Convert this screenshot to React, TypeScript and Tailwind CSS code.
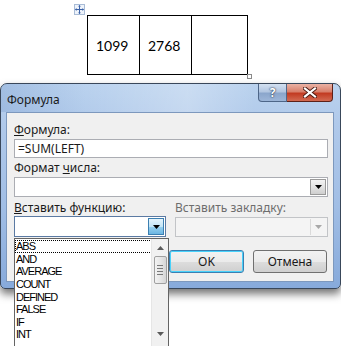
import React from "react";

const ui = { fontFamily: '"Noto Sans", "Open Sans", sans-serif' };
const listFont = { fontFamily: '"Liberation Sans", Arial, sans-serif' };

function Arrow({ color = "#000" }: { color?: string }) {
  return (
    <svg width="7" height="4" viewBox="0 0 7 4">
      <path d="M0 0 H7 L3.5 4 Z" fill={color} />
    </svg>
  );
}

function MoveIcon() {
  return (
    <div className="absolute left-[74px] top-[4px] w-[11px] h-[11px] border border-[#a9bcd6] bg-[#eef3fa] flex items-center justify-center">
      <svg width="9" height="9" viewBox="0 0 9 9">
        <path d="M4.5 0.5 V8.5 M0.5 4.5 H8.5" stroke="#3b62a8" strokeWidth="1" />
        <path d="M4.5 0 L3 1.6 H6 Z M4.5 9 L3 7.4 H6 Z M0 4.5 L1.6 3 V6 Z M9 4.5 L7.4 3 V6 Z" fill="#3b62a8" />
      </svg>
    </div>
  );
}

export default function App() {
  const items = ["ABS", "AND", "AVERAGE", "COUNT", "DEFINED", "FALSE", "IF", "INT"];
  return (
    <div className="relative w-[341px] h-[346px] bg-white overflow-hidden" style={ui}>
      <MoveIcon />
      {/* table */}
      <div className="pt-[15px] pl-[87px]">
        <div className="relative flex w-[161px] h-[60px] border border-black">
          <div
            className="w-[52px] border-r border-black flex items-center pl-[8px] text-[14px] text-black"
            style={{ fontFamily: "Lato, sans-serif" }}
          >
            1099
          </div>
          <div
            className="w-[52px] border-r border-black flex items-center pl-[8px] text-[14px] text-black"
            style={{ fontFamily: "Lato, sans-serif" }}
          >
            2768
          </div>
          <div className="w-[53px]" />
          <div className="absolute left-[159px] top-[58px] w-[5px] h-[5px] border border-[#8a8a8a] bg-white" />
        </div>
      </div>

      {/* dialog */}
      <div className="mt-[8px] w-[341px] h-[206px] rounded-t-[7px] rounded-b-[5px] border border-[#39475a] bg-[linear-gradient(180deg,#bad2ee_0%,#b0c9ea_20%,#a1bee5_60%,#87aadb_100%)] shadow-[0_5px_8px_rgba(0,0,0,0.55)] pl-[5px] pr-[6px] flex flex-col">
        {/* title bar */}
        <div className="h-[28px] flex items-start justify-between bg-[linear-gradient(90deg,rgba(120,155,205,0.35)_0%,rgba(255,255,255,0)_25%,rgba(255,255,255,0.25)_55%,rgba(255,255,255,0)_75%)] -ml-[5px] -mr-[6px] pl-[6px] pr-[7px] rounded-t-[6px]">
          <div className="pt-[8px] text-[12px] leading-[16px] text-[#1a1a1a]">Формула</div>
          <div className="flex">
            <div className="w-[29px] h-[18px] rounded-bl-[4px] border border-t-0 border-[#4e6688] bg-[linear-gradient(180deg,#d3e0f0_0%,#b2c6e1_45%,#8ba6cc_55%,#9db6d8_100%)] flex items-center justify-center text-[12px] font-bold text-white leading-none [text-shadow:0_0_1px_#24344d,0_0_2px_#24344d]">
              ?
            </div>
            <div className="w-[46px] h-[18px] rounded-br-[4px] border border-l-0 border-t-0 border-[#5d2119] bg-[linear-gradient(180deg,#eab2a4_0%,#d8806c_45%,#c23b22_55%,#d26a52_100%)] flex items-center justify-center">
              <svg width="14" height="11" viewBox="0 0 14 11">
                <path d="M2 1.5 L12 9.5 M12 1.5 L2 9.5" stroke="#4a1a12" strokeWidth="4" strokeLinecap="square" />
                <path d="M2 1.5 L12 9.5 M12 1.5 L2 9.5" stroke="#ffffff" strokeWidth="2.2" strokeLinecap="square" />
              </svg>
            </div>
          </div>
        </div>

        {/* client area */}
        <div className="relative w-[328px] h-[170px] border border-[#7d98bd] bg-[#f0f0f0] text-[12px] text-[#1a1a1a]">
          <div className="pl-[7px]">
            <div className="mt-[9px] h-[16px] leading-[16px]">
              <span className="underline">Ф</span>ормула:
            </div>
            <div className="mt-[1px] w-[314px] h-[19px] border border-[#abadb3] bg-white pl-[3px] leading-[17px]">
              =SUM(LEFT)
            </div>
            <div className="mt-[2px] h-[16px] leading-[16px]">
              Формат <span className="underline">ч</span>исла:
            </div>
            <div className="mt-[1px] w-[314px] h-[20px] border border-[#abadb3] bg-white flex justify-end items-center pr-[1px]">
              <div className="w-[16px] h-[16px] border border-[#9a9a9a] bg-[linear-gradient(180deg,#f3f3f3_0%,#e2e2e2_50%,#cfcfcf_100%)] flex items-center justify-center">
                <Arrow />
              </div>
            </div>
            <div className="mt-[3px] h-[16px] leading-[16px] flex">
              <div className="w-[161px]">
                <span className="underline">В</span>ставить функцию:
              </div>
              <div className="text-[#6d6d6d]">Вставить закладку:</div>
            </div>
            <div className="flex items-start">
              <div className="w-[152px] h-[21px] border border-[#5b7aa3] bg-white flex justify-end items-center pr-[1px]">
                <div className="w-[16px] h-[17px] border border-[#3c7fb1] bg-[linear-gradient(180deg,#e5f4fc_0%,#c4e5f6_50%,#98d1ef_51%,#6cb6e3_100%)] flex items-center justify-center">
                  <Arrow />
                </div>
              </div>
              <div className="ml-[9px] mt-[1px] w-[153px] h-[20px] border border-[#c2c4c7] bg-[#f4f4f4] flex justify-end items-center pr-[1px]">
                <div className="w-[16px] h-[16px] border-l border-[#dadada] flex items-center justify-center">
                  <Arrow color="#a8a8a8" />
                </div>
              </div>
            </div>
          </div>
          <div className="mt-[13px] flex justify-end gap-[9px] pr-[6px]">
            <div className="w-[75px] h-[23px] rounded-[3px] border border-[#3c7fb1] shadow-[inset_0_0_0_1px_#48d2fb] bg-[linear-gradient(180deg,#f2f2f2_0%,#ebebeb_50%,#dddddd_51%,#cfcfcf_100%)] flex items-center justify-center">
              OK
            </div>
            <div className="w-[74px] h-[23px] rounded-[3px] border border-[#707070] bg-[linear-gradient(180deg,#f2f2f2_0%,#ebebeb_50%,#dddddd_51%,#cfcfcf_100%)] flex items-center justify-center">
              Отмена
            </div>
          </div>
        </div>
      </div>

      {/* dropdown list overlay */}
      <div className="absolute left-[14px] top-[238px] w-[155px] h-[120px] border border-[#646464] bg-white flex" style={listFont}>
        <div className="flex-1 pt-[1px] text-[11px] tracking-[-1px] text-black">
          {items.map((it, i) =>
            i === 0 ? (
              <div
                key={it}
                className="h-[12.65px] leading-[10.65px] border border-dotted border-black -mr-[1px]"
              >
                {it}
              </div>
            ) : (
              <div key={it} className="h-[12.65px] leading-[12.65px] pl-[1px]">
                {it}
              </div>
            )
          )}
        </div>
        <div className="w-[17px] bg-[#f1f1f1] border-l border-[#e6e6e6] flex flex-col items-center">
          <div className="h-[17px] flex items-center justify-center">
            <svg width="7" height="4" viewBox="0 0 7 4">
              <path d="M3.5 0 L7 4 H0 Z" fill="#5a5a5a" />
            </svg>
          </div>
          <div className="w-[13px] h-[28px] rounded-[2px] border border-[#a0a0a0] bg-[linear-gradient(90deg,#f3f3f3_0%,#e6e6e6_50%,#d6d6d6_100%)] flex flex-col items-center justify-center gap-[2px]">
            <div className="w-[6px] h-[1px] bg-[#7a7a7a]" />
            <div className="w-[6px] h-[1px] bg-[#7a7a7a]" />
            <div className="w-[6px] h-[1px] bg-[#7a7a7a]" />
            <div className="w-[6px] h-[1px] bg-[#7a7a7a]" />
          </div>
          <div className="mt-[46px] h-[8px] flex items-center justify-center">
            <svg width="7" height="4" viewBox="0 0 7 4">
              <path d="M0 0 H7 L3.5 4 Z" fill="#5a5a5a" />
            </svg>
          </div>
        </div>
      </div>
    </div>
  );
}
